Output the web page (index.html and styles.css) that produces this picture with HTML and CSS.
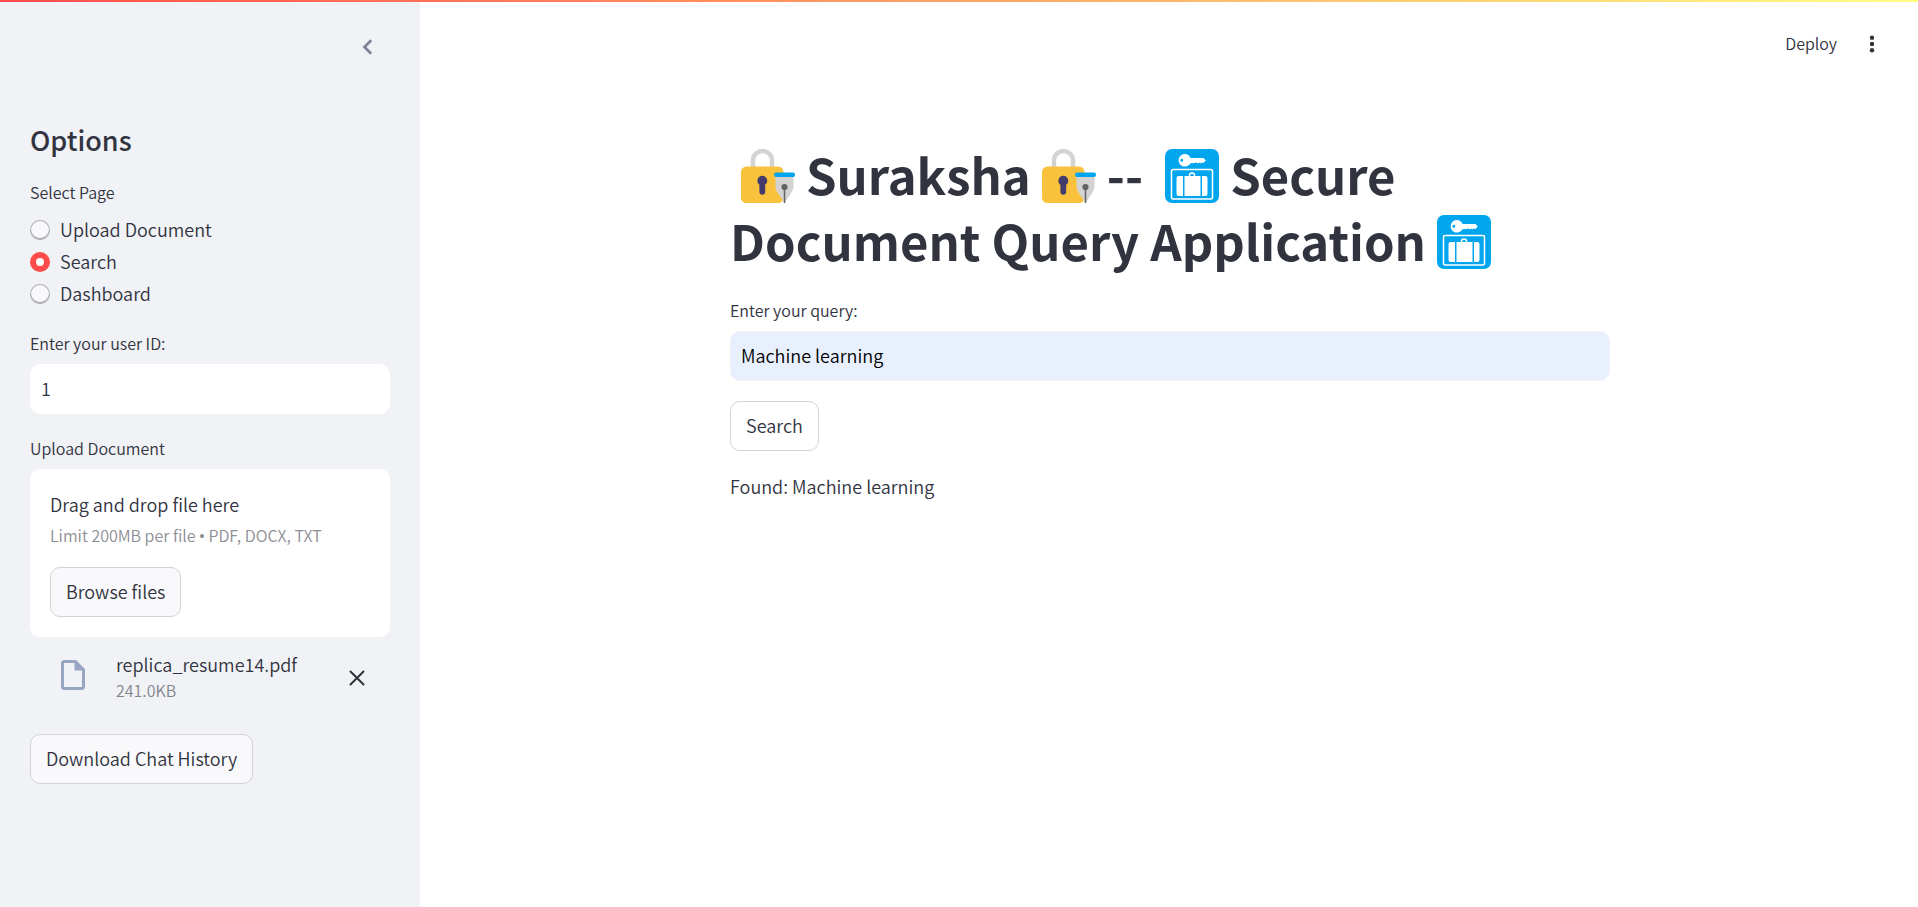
FILE: index.html
```html
<!DOCTYPE html>
<html lang="en">
<head>
<meta charset="utf-8">
<title>Suraksha</title>
<link rel="stylesheet" href="styles.css">
</head>
<body>
<svg class="sprite" aria-hidden="true">
  <symbol id="lock-pen" viewBox="0 0 54 54">
    <path d="M12 20V11.500a9.500 9.500 0 0 1 19 0V20" fill="none" stroke="#d3d3d3" stroke-width="4.500"/>
    <rect x="0" y="17.500" width="42.500" height="36.500" rx="5.500" fill="#f9c23c"/>
    <path d="M21.300 26.800a5 5 0 0 1 2.900 9v7a2.900 2.900 0 0 1-5.800 0v-7a5 5 0 0 1 2.900-9z" fill="#433b6b"/>
    <path d="M34.500 27h18v10c0 3-1.500 5.500-3 8l-5.800 9-6.200-9c-1.700-2.500-3-5-3-8z" fill="#d3d3d3"/>
    <circle cx="43.500" cy="38" r="3.100" fill="#636363"/>
    <path d="M43.500 38v16" stroke="#636363" stroke-width="1.500"/>
    <rect x="33" y="23.500" width="21" height="4.500" rx="2" fill="#00a6ed"/>
  </symbol>
  <symbol id="left-luggage" viewBox="0 0 54 54">
    <rect width="54" height="54" rx="7" fill="#00a6ed"/>
    <path fill="#fff" fill-rule="evenodd" d="M19.500 5a6.300 6.300 0 0 1 6 4H38.500l2.300 2.500L38.500 14l-2-.500-1 1-1-1-1.500 1-1.500-1-1.500.500-4.500.200a6.300 6.300 0 1 1-6-9.200zM16.800 9.800a1.500 1.500 0 1 0 0 3 1.500 1.500 0 0 0 0-3z"/>
    <rect x="6.500" y="20.500" width="41" height="29.500" rx="1.500" fill="none" stroke="#fff" stroke-width="1.500"/>
    <path fill="#fff" d="M13.500 27H18v20h-4.500a2 2 0 0 1-2-2V29a2 2 0 0 1 2-2zM19.500 27h16v20h-16zM37 27h3.500a2 2 0 0 1 2 2v16a2 2 0 0 1-2 2H37z"/>
    <path d="M24.500 27.500v-1a2.500 2.500 0 0 1 5 0v1" fill="none" stroke="#fff" stroke-width="1.500"/>
  </symbol>
</svg>
<div class="accent"></div>
<div class="app">
  <aside class="sidebar">
    <div class="sidebar-top">
      <button class="icon-button collapse" aria-label="Collapse sidebar">
        <svg width="24" height="24" viewBox="0 0 24 24"><path d="M16.200 5.300 9.500 12l6.700 6.700" fill="none" stroke="#808495" stroke-width="2.800"/></svg>
      </button>
    </div>
    <div class="stack">
      <h2 class="title">Options</h2>
      <div class="field" role="radiogroup" aria-labelledby="page-label">
        <span class="label" id="page-label">Select Page</span>
        <div class="radios">
          <label class="radio"><input type="radio" name="page"><span>Upload Document</span></label>
          <label class="radio"><input type="radio" name="page" checked><span>Search</span></label>
          <label class="radio"><input type="radio" name="page"><span>Dashboard</span></label>
        </div>
      </div>
      <div class="field">
        <label class="label" for="user">Enter your user ID:</label>
        <input class="input" id="user" type="text" value="1">
      </div>
      <div class="field uploader">
        <span class="label">Upload Document</span>
        <section class="dropzone">
          <span class="drop-title">Drag and drop file here</span>
          <span class="drop-limit">Limit 200MB per file <span class="bullet">•</span> PDF, DOCX, TXT</span>
          <button class="button">Browse files</button>
        </section>
        <div class="file">
          <svg class="file-icon" width="36" height="36" viewBox="0 0 24 24"><path fill="#97a6c3" d="M14 2H6c-1.100 0-2 .900-2 2v16c0 1.100.900 2 2 2h12c1.100 0 2-.900 2-2V8l-6-6zM6 20V4h7v5h5v11H6z"/></svg>
          <div class="file-text">
            <span class="file-name">replica_resume14.pdf</span>
            <span class="file-size">241.0KB</span>
          </div>
          <button class="icon-button" aria-label="Remove file">
            <svg width="24" height="24" viewBox="0 0 24 24"><path d="m5.500 5.500 13 13m0-13-13 13" fill="none" stroke="#31333f" stroke-width="2" stroke-linecap="round"/></svg>
          </button>
        </div>
      </div>
      <button class="button">Download Chat History</button>
    </div>
  </aside>
  <div class="page">
    <header class="toolbar">
      <button class="deploy">Deploy</button>
      <button class="icon-button" aria-label="Main menu">
        <svg width="24" height="24" viewBox="0 0 24 24" fill="#31333f"><circle cx="12" cy="5.800" r="2.200"/><circle cx="12" cy="12" r="2.200"/><circle cx="12" cy="18.200" r="2.200"/></svg>
      </button>
    </header>
    <main class="content stack">
      <h1 class="heading"><svg class="emoji" aria-hidden="true"><use href="#lock-pen"/></svg>Suraksha<svg class="emoji" aria-hidden="true"><use href="#lock-pen"/></svg>-- <svg class="emoji" aria-hidden="true"><use href="#left-luggage"/></svg>Secure Document Query Application<svg class="emoji" aria-hidden="true"><use href="#left-luggage"/></svg></h1>
      <div class="field">
        <label class="label" for="query">Enter your query:</label>
        <input class="input filled" id="query" type="text" value="Machine learning">
      </div>
      <button class="button plain">Search</button>
      <p class="result">Found: Machine learning</p>
    </main>
  </div>
</div>
</body>
</html>
```
FILE: styles.css
```css
* { box-sizing: border-box; }

body {
  margin: 0;
  background: #fff;
  color: #31333f;
  font: 350 18px/30px "Source Sans Pro", "Noto Sans CJK SC", sans-serif;
}

button, input { font: inherit; color: inherit; }

.sprite { position: absolute; width: 0; height: 0; }

.accent {
  position: fixed;
  inset: 0 0 auto;
  height: 2px;
  background: linear-gradient(90deg, #ff4b4b, #fffd80);
}

.app { display: flex; min-height: 100vh; }

.sidebar {
  flex: none;
  width: 420px;
  padding: 0 30px 40px;
  background: #f0f2f6;
}

.sidebar-top {
  display: flex;
  justify-content: flex-end;
  height: 122px;
  padding: 35px 11px 0;
}

.stack {
  display: flex;
  flex-direction: column;
  align-items: flex-start;
  gap: 20px;
}

.title {
  margin: 0;
  font-size: 27px;
  line-height: 36px;
  font-weight: 500;
}

.field { width: 100%; }

.label {
  display: block;
  margin-bottom: 7px;
  font-size: 16px;
  line-height: 28px;
}

.radios { display: grid; gap: 2px; padding-top: 2px; }

.radio {
  display: flex;
  align-items: center;
  gap: 10px;
  height: 30px;
}

.radio span { padding-bottom: 2px; }

.radio input {
  appearance: none;
  width: 20px;
  height: 20px;
  margin: 0;
  border: 1px solid #aeafb6;
  border-bottom-color: #9a9ba3;
  border-radius: 50%;
  background: #f9f9fb;
  box-shadow: inset 0 -1px #b4b5bc;
}

.radio input:checked {
  border: 6px solid #ff4b4b;
  background: #fff;
  box-shadow: none;
}

.input {
  display: block;
  width: 100%;
  height: 50px;
  padding: 0 10px 2px;
  border: 1px solid #fff;
  border-radius: 10px;
  background: #fff;
}

.filled {
  border-color: #f0f2f6;
  background: #e8f0fe;
  color: #000;
}

.button {
  height: 50px;
  padding: 0 15px 2px;
  border: 1px solid #d2d3d7;
  border-radius: 10px;
  background: #f9f9fb;
}

.plain { background: #fff; }

.icon-button {
  display: flex;
  align-items: center;
  justify-content: center;
  width: 24px;
  height: 24px;
  padding: 0;
  border: 0;
  background: none;
}

.uploader { padding-bottom: 9px; }

.dropzone {
  display: flex;
  flex-direction: column;
  align-items: flex-start;
  padding: 20px;
  border-radius: 10px;
  background: #fff;
}

.drop-limit {
  margin-bottom: 16px;
  color: #8d8e95;
  font-size: 16px;
  line-height: 32px;
}

.bullet {
  font-family: Roboto, sans-serif;
  font-weight: 700;
  line-height: 1;
}

.file {
  display: flex;
  align-items: center;
  gap: 25px;
  padding: 14px 21px 0 25px;
}

.file-icon { margin-bottom: 6px; }

.file-text { display: grid; flex: 1; padding-bottom: 2px; }

.file-name { line-height: 26px; }

.file-size {
  color: #83858c;
  font-size: 16px;
  line-height: 26px;
}

.page { flex: 1; padding-left: 2px; }

.toolbar {
  display: flex;
  justify-content: flex-end;
  align-items: center;
  gap: 23px;
  height: 88px;
  padding-right: 34px;
}

.deploy {
  padding: 0 0 2px;
  border: 0;
  background: none;
  font-size: 16px;
}

.content {
  max-width: 880px;
  margin: 0 auto;
  padding-top: 53px;
}

.heading {
  margin: 0 0 3px;
  font-size: 49px;
  line-height: 66px;
  font-weight: 700;
}

.emoji {
  width: 54px;
  height: 54px;
  margin: 0 11px;
  vertical-align: -8px;
}

.result { margin: 0; }
```
